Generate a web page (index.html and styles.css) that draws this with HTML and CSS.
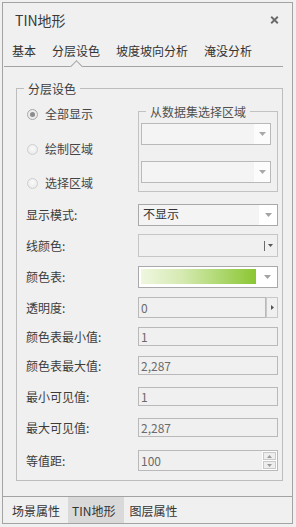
FILE: index.html
```html
<!DOCTYPE html>
<html lang="zh-CN">
<head>
<meta charset="utf-8">
<link rel="stylesheet" href="styles.css">
</head>
<body>
<div class="panel">
  <div class="titlebar">
    <span class="title">TIN地形</span>
    <svg class="close" width="9" height="8" viewBox="0 0 9 8"><path d="M1.2 0.8 L7.8 7.2 M7.8 0.8 L1.2 7.2" stroke="#6a6a6a" stroke-width="1.9" fill="none"/></svg>
  </div>
  <div class="tabs">
    <span class="tab">基本</span>
    <span class="tab active">分层设色</span>
    <span class="tab">坡度坡向分析</span>
    <span class="tab">淹没分析</span>
  </div>
  <div class="content">
    <fieldset class="group">
      <legend>分层设色</legend>
      <div class="group-body">
        <div class="top-section">
          <div class="radios">
            <div class="radio-row"><span class="radio checked"></span><span>全部显示</span></div>
            <div class="radio-row"><span class="radio"></span><span>绘制区域</span></div>
            <div class="radio-row"><span class="radio"></span><span>选择区域</span></div>
          </div>
          <fieldset class="group inner">
            <legend>从数据集选择区域</legend>
            <div class="inner-body">
              <div class="combo small disabled"><span class="combo-field"></span><span class="combo-btn"><svg width="7" height="4" viewBox="0 0 7 4"><path d="M0 0H7L3.5 4Z" fill="#a9a9a9"/></svg></span></div>
              <div class="combo small disabled second"><span class="combo-field"></span><span class="combo-btn"><svg width="7" height="4" viewBox="0 0 7 4"><path d="M0 0H7L3.5 4Z" fill="#a9a9a9"/></svg></span></div>
            </div>
          </fieldset>
        </div>
        <div class="form">
          <div class="row">
            <label>显示模式:</label>
            <div class="ctl combo"><span class="combo-field">不显示</span><span class="combo-btn"><svg width="7" height="4" viewBox="0 0 7 4"><path d="M0 0H7L3.5 4Z" fill="#a3a3a3"/></svg></span></div>
          </div>
          <div class="row">
            <label>线颜色:</label>
            <div class="ctl combo line-color"><span class="combo-field"></span><span class="split-btn"><span class="divider"></span><svg width="5" height="3" viewBox="0 0 5 3"><path d="M0 0H5L2.5 3Z" fill="#555"/></svg></span></div>
          </div>
          <div class="row">
            <label>颜色表:</label>
            <div class="ctl combo color-table"><span class="ramp"></span><span class="combo-btn"><svg width="7" height="4" viewBox="0 0 7 4"><path d="M0 0H7L3.5 4Z" fill="#a3a3a3"/></svg></span></div>
          </div>
          <div class="row">
            <label>透明度:</label>
            <div class="ctl opacity">
              <span class="input">0</span>
              <span class="side-btn"><svg width="3" height="5" viewBox="0 0 3 5"><path d="M0 0L3 2.5L0 5Z" fill="#555"/></svg></span>
            </div>
          </div>
          <div class="row">
            <label>颜色表最小值:</label>
            <span class="ctl input">1</span>
          </div>
          <div class="row">
            <label>颜色表最大值:</label>
            <span class="ctl input">2,287</span>
          </div>
          <div class="row">
            <label>最小可见值:</label>
            <span class="ctl input">1</span>
          </div>
          <div class="row">
            <label>最大可见值:</label>
            <span class="ctl input">2,287</span>
          </div>
          <div class="row">
            <label>等值距:</label>
            <div class="ctl input spin-input">
              <span class="spin-value">100</span>
              <span class="spin">
                <span class="spin-btn"><svg width="5" height="3" viewBox="0 0 5 3"><path d="M0 3H5L2.5 0Z" fill="#9a9a9a"/></svg></span>
                <span class="spin-btn"><svg width="5" height="3" viewBox="0 0 5 3"><path d="M0 0H5L2.5 3Z" fill="#9a9a9a"/></svg></span>
              </span>
            </div>
          </div>
        </div>
      </div>
    </fieldset>
  </div>
  <div class="bottom-tabs">
    <span class="btab">场景属性</span>
    <span class="btab active">TIN地形</span>
    <span class="btab">图层属性</span>
  </div>
</div>
</body>
</html>
```

FILE: styles.css
```css
html, body {
  margin: 0;
  background: #f0f0f0;
}
body {
  padding: 2px;
  font-family: "Noto Sans CJK SC", "Microsoft YaHei", sans-serif;
  font-size: 12px;
  color: #3c3c3c;
}
.panel {
  width: 291px;
  height: 522px;
  box-sizing: border-box;
  border: 1px solid #a3a3a3;
  display: flex;
  flex-direction: column;
}
.titlebar {
  height: 33px;
  flex: none;
  display: flex;
  align-items: center;
  justify-content: space-between;
  padding: 0 13px 0 12px;
}
.title {
  font-size: 14px;
  line-height: 18px;
  color: #3a3a3a;
}
.close {
  display: block;
}
.tabs {
  height: 30px;
  flex: none;
  margin: 0 9px 0 1px;
  border-bottom: 1px solid #a3a3a3;
  display: flex;
  align-items: center;
  gap: 16px;
  padding-left: 8px;
}
.tab {
  position: relative;
  line-height: 16px;
  color: #333;
}
.tab.active::after {
  content: "";
  position: absolute;
  left: 50%;
  top: calc(100% + 3px);
  width: 9px;
  height: 9px;
  margin-left: -4.5px;
  box-sizing: border-box;
  border-top: 1px solid #a3a3a3;
  border-left: 1px solid #a3a3a3;
  background: #f0f0f0;
  transform: rotate(45deg);
}
.content {
  flex: 1;
  padding: 13px 9px 0 13px;
}
fieldset.group {
  margin: 0;
  padding: 0;
  min-width: 0;
  border: 1px solid #bdbdbd;
}
fieldset.group legend {
  margin-left: 7px;
  padding: 0 4px;
  line-height: 17px;
  font-size: 12px;
  color: #3c3c3c;
}
.group-body {
  padding: 0 4px 9px 9px;
}
.top-section {
  display: flex;
  align-items: flex-start;
}
.radios {
  width: 112px;
  flex: none;
  display: flex;
  flex-direction: column;
  padding-top: 8px;
}
.radio-row {
  height: 18px;
  display: flex;
  align-items: center;
  gap: 7px;
  padding-left: 1px;
  color: #454545;
  line-height: 16px;
}
.radio-row + .radio-row {
  margin-top: 17px;
}
.radio-row:last-child {
  margin-top: 16px;
}
.radio {
  width: 11px;
  height: 11px;
  box-sizing: border-box;
  border-radius: 50%;
  border: 1px solid #cfcfcf;
  background: radial-gradient(circle at 50% 40%, #fafafa 0%, #ececec 70%, #e2e2e2 100%);
  display: flex;
  align-items: center;
  justify-content: center;
}
.radio.checked {
  border-color: #a8a8a8;
  background: #ececec;
}
.radio.checked::after {
  content: "";
  width: 5px;
  height: 5px;
  border-radius: 50%;
  background: #8c8c8c;
}
fieldset.group.inner {
  width: 140px;
  box-sizing: border-box;
  margin-top: 6px;
  border-color: #c2c2c2;
}
fieldset.group.inner legend {
  color: #505050;
}
.inner-body {
  padding: 3px 6px 8px 2px;
}
.combo {
  display: flex;
  box-sizing: border-box;
  border: 1px solid #a9a9a9;
  background: #f4f4f4;
  color: #333;
}
.combo.small {
  width: 130px;
  height: 22px;
  border-color: #b9b9b9;
}
.combo.small.second {
  margin-top: 16px;
}
.combo-field {
  flex: 1;
  padding-left: 4px;
  line-height: 18px;
}
.combo-btn {
  width: 18px;
  flex: none;
  background: #fff;
  display: flex;
  align-items: center;
  justify-content: center;
}
.combo.small .combo-btn {
  width: 16px;
  background: #fcfcfc;
}
.combo-btn svg,
.split-btn svg,
.side-btn svg,
.spin-btn svg {
  display: block;
}
.form {
  margin-top: 12px;
}
.row {
  display: flex;
  align-items: center;
}
.row label {
  width: 112px;
  flex: none;
  line-height: 16px;
  color: #3c3c3c;
}
.ctl {
  width: 140px;
  height: 100%;
  box-sizing: border-box;
}
.row:nth-child(1) { height: 22px; }
.row:nth-child(2) { height: 23px; margin-top: 8px; }
.row:nth-child(3) { height: 22px; margin-top: 9px; }
.row:nth-child(4) { height: 21px; margin-top: 9px; }
.row:nth-child(5) { height: 19px; margin-top: 9px; }
.row:nth-child(6) { height: 19px; margin-top: 10px; }
.row:nth-child(7) { height: 19px; margin-top: 12px; }
.row:nth-child(8) { height: 19px; margin-top: 12px; }
.row:nth-child(9) { height: 21px; margin-top: 13px; }
.combo.line-color {
  border-color: #c6c6c6;
  background: #f0f0f0;
}
.split-btn {
  display: flex;
  align-items: center;
  padding-right: 4px;
}
.divider {
  width: 1px;
  height: 10px;
  background: #6a6a6a;
  margin-right: 3px;
}
.combo.color-table {
  background: #fff;
}
.ramp {
  width: 115px;
  height: 15px;
  flex: none;
  margin: 2px 2px 0 2px;
  background: linear-gradient(to right, #eff7e0 0%, #d6eab2 35%, #b3da78 65%, #8bc632 100%);
}
.opacity {
  display: flex;
}
.opacity .input {
  width: 128px;
  flex: none;
  height: 100%;
}
.side-btn {
  width: 12px;
  flex: none;
  box-sizing: border-box;
  border: 1px solid #c8c8c8;
  background: #f0f0f0;
  display: flex;
  align-items: center;
  justify-content: center;
}
.input {
  display: flex;
  align-items: center;
  box-sizing: border-box;
  border: 1px solid #b9b9b9;
  background: #f0f0f0;
  color: #6b6b6b;
  padding-left: 2px;
  line-height: 16px;
}
.spin-input {
  padding-right: 0;
}
.spin-value {
  flex: 1;
}
.spin {
  width: 15px;
  height: 100%;
  flex: none;
  box-sizing: border-box;
  padding: 1px;
  background: #fff;
  display: flex;
  flex-direction: column;
  gap: 1px;
}
.spin-btn {
  flex: 1;
  box-sizing: border-box;
  border: 1px solid #c9c9c9;
  background: #eeeeee;
  display: flex;
  align-items: center;
  justify-content: center;
}
.bottom-tabs {
  height: 26px;
  flex: none;
  border-top: 1px solid #a3a3a3;
  display: flex;
  padding-left: 1px;
}
.btab {
  padding: 1px 4px 0 4px;
  line-height: 25px;
  margin-left: 4px;
  color: #333;
}
.btab.active {
  background: #d9d9d9;
  padding-right: 9px;
}
.btab.active + .btab {
  margin-left: 1px;
}
```
